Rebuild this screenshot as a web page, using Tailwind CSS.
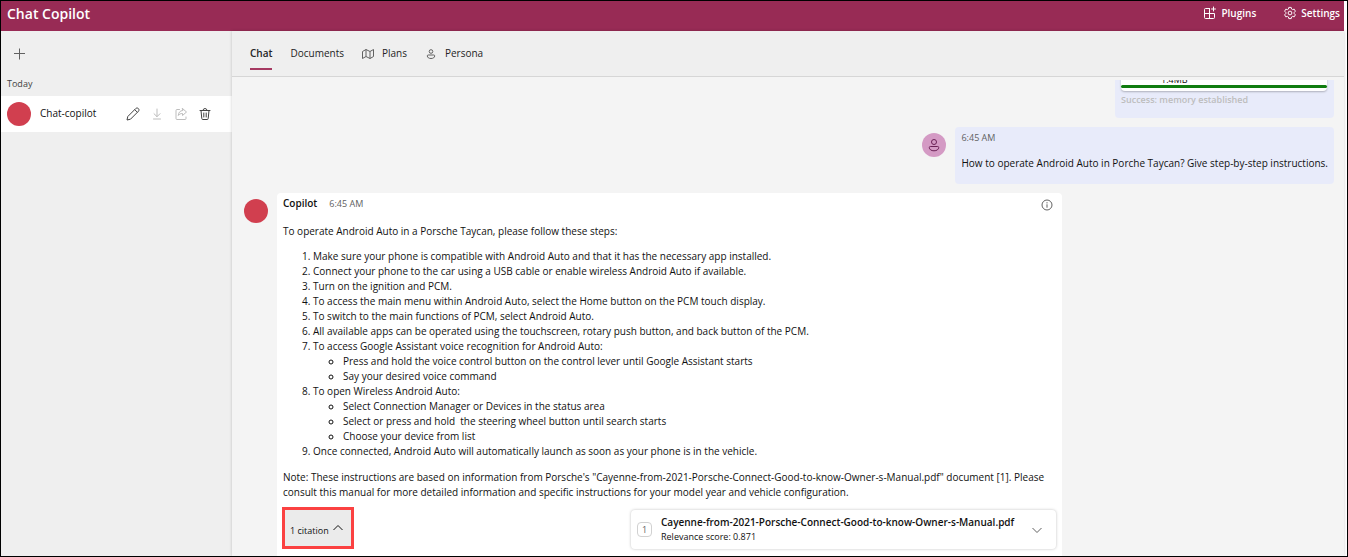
<!DOCTYPE html>
<html lang="en">
<head>
<meta charset="utf-8">
<meta name="viewport" content="width=device-width, initial-scale=1">
<title>Chat Copilot</title>
<script src="https://cdn.jsdelivr.net/npm/@tailwindcss/browser@4"></script>
</head>
<body class="flex h-screen flex-col overflow-hidden border border-black bg-white pr-[3px] font-['Open_Sans','Noto_Sans',sans-serif] text-[10px] leading-[15px] text-[#111]">
<header class="flex h-[30px] shrink-0 items-center justify-between bg-[#982b55] pr-1 pl-1.5 text-white">
  <h1 class="pb-1 text-[14px] leading-5 font-semibold">Chat Copilot</h1>
  <div class="flex items-center gap-[27px] pb-1.5 font-semibold">
    <button class="flex items-center gap-1">
      <svg class="size-3.5" viewBox="0 0 14 14" fill="none" stroke="currentColor" stroke-linecap="round" stroke-linejoin="round"><path d="M6.5 2.5h-4a1 1 0 0 0-1 1v8a1 1 0 0 0 1 1h8a1 1 0 0 0 1-1v-4h-10M6.5 2.5v10M10.5 1v4M8.5 3h4"/></svg>
      Plugins
    </button>
    <button class="flex items-center gap-1">
      <svg class="size-3.5" viewBox="0 0 20 20" fill="none" stroke="currentColor" stroke-width="1.4" stroke-linejoin="round"><path d="M8.300 2h3.400l.5 2.300 1.500.9 2.300-.7 1.700 2.900-1.700 1.700v1.800l1.700 1.700-1.700 2.900-2.300-.7-1.500.9-.5 2.300H8.300l-.5-2.300-1.500-.9-2.300.7-1.700-2.900L4 10.900V9.100L2.300 7.400 4 4.500l2.300.7 1.500-.9z"/><circle cx="10" cy="10" r="2.700"/></svg>
      Settings
    </button>
  </div>
</header>
<div class="flex min-h-0 flex-1">
  <aside class="w-[231px] shrink-0 bg-[#efefef]">
    <div class="flex h-[45px] items-center pl-3">
      <button aria-label="New chat" class="text-[#616161]"><svg class="size-3" viewBox="0 0 12 12" stroke="currentColor"><path d="M6.5.5v11M1 5.5h11"/></svg></button>
    </div>
    <h2 class="h-5 pl-1.5 text-[9px] text-[#424242]">Today</h2>
    <div class="flex h-9 items-center bg-white pl-1.5">
      <span class="size-6 rounded-full bg-[#d13f4f]"></span>
      <span class="w-[91px] pb-0.5 pl-[9px]">Chat-copilot</span>
      <div class="flex items-center gap-2.5 pl-1">
        <button aria-label="Rename" class="text-[#424242]"><svg class="size-3.5" viewBox="0 0 14 14" fill="none" stroke="currentColor" stroke-linejoin="round"><path d="M1 13l.8-3.500 8-8c1.800-1.500 4.200.8 2.700 2.700l-8 8zM8.700 2.600l2.700 2.700"/></svg></button>
        <button aria-label="Download" class="text-[#bdbdbd]"><svg class="size-3.5" viewBox="0 0 14 14" fill="none" stroke="currentColor" stroke-linecap="round" stroke-linejoin="round"><path d="M7 2v7.500M4 6.700l3 3 3-3M3.500 12h7"/></svg></button>
        <button aria-label="Share" class="text-[#bdbdbd]"><svg class="size-3.5" viewBox="0 0 14 14" fill="none" stroke="currentColor" stroke-linecap="round" stroke-linejoin="round"><path d="M5.500 2.500H3a1 1 0 0 0-1 1v8a1 1 0 0 0 1 1h8a1 1 0 0 0 1-1V10M8.500 1.500l4 3.500-4 3.500v-2c-2 0-3 .5-4.200 2 .2-3 1.700-4.800 4.200-5z"/></svg></button>
        <button aria-label="Delete" class="text-[#424242]"><svg class="size-3.5" viewBox="0 0 14 14" fill="none" stroke="currentColor" stroke-linecap="round"><path d="M2 3.500h10M5 3.500a2 2 0 0 1 4 0M3 3.500l.8 8a1 1 0 0 0 1 1h4.400a1 1 0 0 0 1-1l.8-8M5.800 6v4M8.200 6v4"/></svg></button>
      </div>
    </div>
  </aside>
  <main class="z-10 flex min-w-0 flex-1 flex-col bg-[#f4f4f4] shadow-[0_0_3px_rgba(0,0,0,0.2)]">
    <nav class="flex h-[46px] shrink-0 items-stretch gap-[18px] border-b border-[#d6d6d6] bg-[#efefef] pl-[18px] text-[#242424]">
      <button class="mb-1.5 border-b-2 border-[#a63a62] pt-[7px] font-semibold">Chat</button>
      <button>Documents</button>
      <button class="flex items-center gap-2"><svg class="size-3" viewBox="0 0 12 12" fill="none" stroke="#616161" stroke-linejoin="round"><path d="M.5 3.500l3.500-2 4 2 3.500-2v7l-3.500 2-4-2-3.500 2zM4 1.500v7M8 3.500v7"/></svg>Plans</button>
      <button class="flex items-center gap-2"><svg class="size-3" viewBox="0 0 12 12" fill="none" stroke="#616161"><circle cx="6" cy="3.500" r="1.800"/><path d="M3.200 7h5.600a.9.900 0 0 1 .9.900c0 1.600-1.500 2.600-3.700 2.600S2.300 9.500 2.300 7.900a.9.900 0 0 1 .9-.9z"/></svg>Persona</button>
    </nav>
    <div class="mt-[3px] flex min-h-0 flex-1 flex-col justify-end gap-[9px] overflow-hidden pr-2.5 pl-3">
      <section class="w-[219px] shrink-0 self-end rounded-sm bg-[#e8ebfa] px-1.5 pb-[11px]">
        <div class="mr-px rounded-sm bg-white pb-[3px] shadow-[0_1px_2px_rgba(0,0,0,0.25)]">
          <p class="pl-10 text-[9px] leading-[10px]">1.4MB</p>
          <div class="h-[3px] rounded-sm bg-[#107c10]"></div>
        </div>
        <p class="pt-px text-[9px] font-semibold text-[#bdbdbd]">Success: memory established</p>
      </section>
      <section class="flex shrink-0 items-start gap-[9px] self-end">
        <span class="mt-1.5 flex size-6 items-center justify-center rounded-full bg-[#d49ac4] text-[#6b2156]"><svg class="size-3.5" viewBox="0 0 14 14" fill="none" stroke="currentColor"><circle cx="7" cy="4" r="2.500"/><path d="M3.300 8.500h7.400a1 1 0 0 1 1 1c0 2-2 3.300-4.700 3.300S2.300 11.500 2.300 9.500a1 1 0 0 1 1-1z"/></svg></span>
        <div class="rounded-sm bg-[#e8ebfa] px-1.5 pt-[3px] pb-[13px]">
          <time class="block text-[9px] text-[#616161]">6:45 AM</time>
          <p class="pt-[11px]">How to operate Android Auto in Porche Taycan? Give step-by-step instructions.</p>
        </div>
      </section>
      <section class="flex shrink-0 items-start gap-[9px]">
        <span class="mt-1.5 size-6 shrink-0 rounded-full bg-[#d13f4f]"></span>
        <article class="w-[785px] rounded-t-sm bg-white px-1.5 pt-[3px] pb-[7px]">
          <div class="flex items-center gap-3">
            <h3 class="font-semibold">Copilot</h3>
            <time class="flex-1 text-[9px] text-[#616161]">6:45 AM</time>
            <button aria-label="Prompt information" class="mr-[3px] pt-0.5 text-[#616161]"><svg class="size-3" viewBox="0 0 12 12" fill="none" stroke="currentColor"><circle cx="6" cy="6" r="5"/><path d="M6 5.300v3.400M6 3.200v1.200"/></svg></button>
          </div>
          <p class="pt-[13px]">To operate Android Auto in a Porsche Taycan, please follow these steps:</p>
          <ol class="mt-2.5 list-decimal pl-[30px]">
            <li>Make sure your phone is compatible with Android Auto and that it has the necessary app installed.</li>
            <li>Connect your phone to the car using a USB cable or enable wireless Android Auto if available.</li>
            <li>Turn on the ignition and PCM.</li>
            <li>To access the main menu within Android Auto, select the Home button on the PCM touch display.</li>
            <li>To switch to the main functions of PCM, select Android Auto.</li>
            <li>All available apps can be operated using the touchscreen, rotary push button, and back button of the PCM.</li>
            <li>To access Google Assistant voice recognition for Android Auto:
              <ul class="list-[circle] pl-[30px]"><li>Press and hold the voice control button on the control lever until Google Assistant starts</li><li>Say your desired voice command</li></ul></li>
            <li>To open Wireless Android Auto:
              <ul class="list-[circle] pl-[30px]"><li>Select Connection Manager or Devices in the status area</li><li>Select or press and hold&nbsp; the steering wheel button until search starts</li><li>Choose your device from list</li></ul></li>
            <li>Once connected, Android Auto will automatically launch as soon as your phone is in the vehicle.</li>
          </ol>
          <p class="mt-[11px]">Note: These instructions are based on information from Porsche's "Cayenne-from-2021-Porsche-Connect-Good-to-know-Owner-s-Manual.pdf" document [1]. Please consult this manual for more detailed information and specific instructions for your model year and vehicle configuration.</p>
          <div class="mt-[7px] flex items-end justify-between">
            <button class="-ml-px flex h-[42px] w-[72px] items-center gap-1 border-3 border-[#fb4141] bg-[#ebebeb] pt-1 pl-[5px] text-[9px]">1 citation<svg class="mb-1 size-2.5" viewBox="0 0 10 10" fill="none" stroke="currentColor"><path d="M.5 7L5 2.500 9.500 7"/></svg></button>
            <div class="flex h-[39px] w-[425px] items-center rounded-sm bg-white pr-3.5 pl-1.5 shadow-[0_0_3px_rgba(0,0,0,0.25)]">
              <span class="mr-[9px] flex size-[15px] items-center justify-center rounded-sm border border-[#d1d1d1] text-[9px] text-[#616161]">1</span>
              <div class="flex-1"><h4 class="font-semibold">Cayenne-from-2021-Porsche-Connect-Good-to-know-Owner-s-Manual.pdf</h4><p class="text-[9px] leading-[14px]">Relevance score: 0.871</p></div>
              <button aria-label="Expand citation" class="text-[#616161]"><svg class="size-2.5" viewBox="0 0 10 10" fill="none" stroke="currentColor"><path d="M.5 3L5 7.500 9.500 3"/></svg></button>
            </div>
          </div>
        </article>
      </section>
    </div>
  </main>
</div>
</body>
</html>
